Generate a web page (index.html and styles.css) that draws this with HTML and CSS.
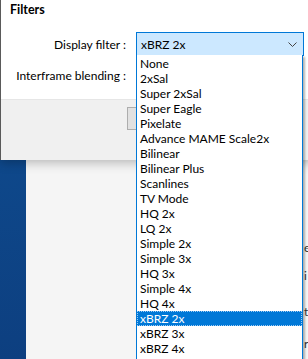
FILE: index.html
```html
<!DOCTYPE html>
<html lang="en">
<head>
  <meta charset="UTF-8" />
  <title>Filters</title>
  <link rel="stylesheet" href="styles.css">
</head>
<body>
  <div class="desktop">
    <div class="back-window">
      <span class="frag f1">e</span>
      <span class="frag f2">i</span>
      <span class="frag f3">t</span>
      <span class="frag f4">r</span>
    </div>

    <div class="dialog">
      <div class="content">
        <div class="title">Filters</div>
        <div class="row">
          <label class="label">Display filter :</label>
          <div class="select">
            <span>xBRZ 2x</span>
            <svg class="chevron" width="9" height="5" viewBox="0 0 9 5"><path d="M0.5 0.5 L4.5 4.5 L8.5 0.5" fill="none" stroke="#444" stroke-width="1"/></svg>
          </div>
        </div>
        <div class="row">
          <label class="label">Interframe blending :</label>
        </div>
      </div>
      <div class="footer">
        <button class="btn"></button>
      </div>
    </div>

    <ul class="listbox">
      <li>None</li>
      <li>2xSal</li>
      <li>Super 2xSal</li>
      <li>Super Eagle</li>
      <li>Pixelate</li>
      <li>Advance MAME Scale2x</li>
      <li>Bilinear</li>
      <li>Bilinear Plus</li>
      <li>Scanlines</li>
      <li>TV Mode</li>
      <li>HQ 2x</li>
      <li>LQ 2x</li>
      <li>Simple 2x</li>
      <li>Simple 3x</li>
      <li>HQ 3x</li>
      <li>Simple 4x</li>
      <li>HQ 4x</li>
      <li class="selected">xBRZ 2x</li>
      <li>xBRZ 3x</li>
      <li>xBRZ 4x</li>
    </ul>
  </div>
</body>
</html>
```

FILE: styles.css
```css
:root {
  --accent: #0078d7;
  --face: #f0f0f0;
  --font: Lato, 'Noto Sans', sans-serif;
}
* { box-sizing: border-box; margin: 0; padding: 0; }
body { font-family: var(--font); font-size: 12px; color: #000; overflow: hidden; }
.desktop {
  position: relative;
  width: 308px;
  height: 359px;
  background: linear-gradient(180deg, #0f4f93, #0d3f80);
  overflow: hidden;
}
.back-window {
  position: absolute;
  left: 26px;
  top: 150px;
  width: 300px;
  height: 220px;
  background: #f5f5f5;
}
.frag { position: absolute; left: 278px; color: #333; }
.f1 { top: 90px; }
.f2 { top: 118px; }
.f3 { top: 154px; }
.f4 { top: 186px; }
.dialog {
  position: absolute;
  left: 0;
  top: 0;
  width: 330px;
  height: 160px;
  border-left: 1px solid #5a5a5a;
  background: var(--face);
  box-shadow: 0 3px 10px rgba(0,0,0,0.25);
}
.content { background: #fff; height: 100px; border-bottom: 1px solid #e6e6e6; }
.title { font-weight: 700; font-size: 12.5px; padding: 2px 0 0 9px; height: 32px; }
.row { display: flex; align-items: center; height: 24px; margin-bottom: 7px; }
.label { width: 135px; flex: none; text-align: right; padding-right: 10px; white-space: nowrap; }
.select {
  width: 168px;
  height: 24px;
  border: 1px solid var(--accent);
  background: #cce8ff;
  display: flex;
  align-items: center;
  padding-left: 4px;
}
.select span { flex: 1; }
.chevron { margin-right: 6px; }
.footer { padding: 7px 0 0 126px; }
.btn { width: 75px; height: 23px; background: #e1e1e1; border: 1px solid #adadad; }
.listbox {
  position: absolute;
  left: 136px;
  top: 55px;
  width: 167px;
  height: 320px;
  list-style: none;
  background: #fff;
  border: 1px solid var(--accent);
  border-top: none;
  padding-top: 1px;
  box-shadow: 2px 2px 2px rgba(0,0,0,0.3);
}
.listbox li { height: 15px; line-height: 15px; padding-left: 3px; white-space: nowrap; }
.listbox li.selected { background: var(--accent); color: #fff; outline: 1px dotted #9fcdf5; outline-offset: -1px; }
```
